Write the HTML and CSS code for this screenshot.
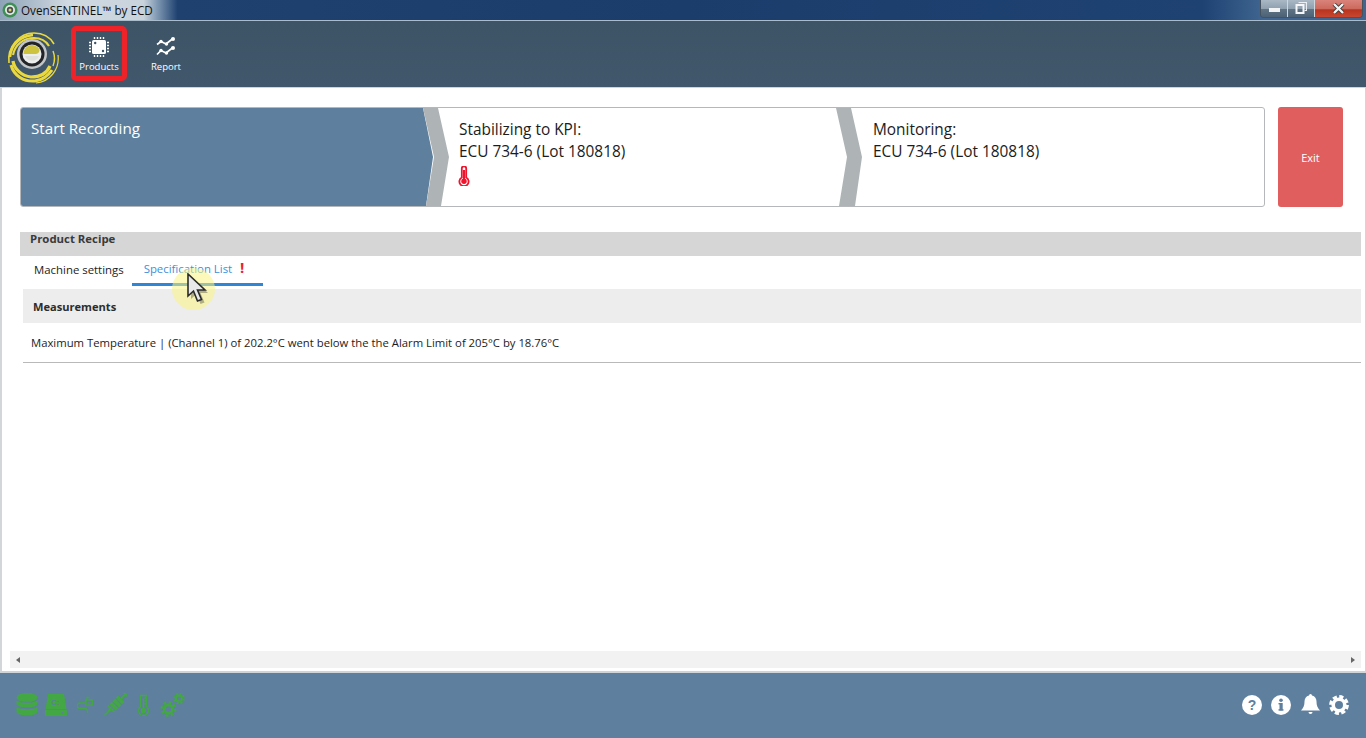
FILE: index.html
```html
<!DOCTYPE html>
<html lang="en">
<head>
<meta charset="utf-8">
<title>OvenSENTINEL by ECD</title>
<link rel="stylesheet" href="styles.css">
</head>
<body>
<div class="window">
  <header class="titlebar">
    <svg class="app-icon" width="16" height="16" viewBox="0 0 16 16"><circle cx="8" cy="8" r="7.5" fill="#3f8f56"/><circle cx="8" cy="8" r="5" fill="#e6ebe6"/><circle cx="8" cy="8" r="3.2" fill="#4a4f55"/><circle cx="8" cy="8" r="1.5" fill="#d8d36a"/></svg>
    <span class="title-text">OvenSENTINEL™ by ECD</span>
    <div class="win-buttons">
      <div class="win-btn win-min"><span class="min-bar"></span></div>
      <div class="win-btn win-max"><svg width="12" height="12" viewBox="0 0 12 12"><path d="M3.5 .5h8v8h-2" fill="none" stroke="#e8eef3" stroke-width="1.2"/><rect x="1.5" y="3" width="7" height="8" fill="none" stroke="#f4f6f8" stroke-width="2"/></svg></div>
      <div class="win-btn win-close"><svg width="13" height="11" viewBox="0 0 13 11"><path d="M2 1l9 9M11 1l-9 9" stroke="#3c3c3c" stroke-width="4"/><path d="M2 1l9 9M11 1l-9 9" stroke="#f2f2f2" stroke-width="2.4"/></svg></div>
    </div>
  </header>

  <nav class="toolbar">
    <svg class="logo" width="54" height="54" viewBox="0 0 54 54">
      <path d="M3 32C1 16 13 2 28 2c9 0 16 4 20 11" fill="none" stroke="#e9d93f" stroke-width="1.6"/>
      <path d="M52 24c2 15-9 27-22 28" fill="none" stroke="#e9d93f" stroke-width="1.2"/>
      <path d="M5 34c3 11 13 17 24 16 7-1 13-5 17-11" fill="none" stroke="#e9d93f" stroke-width="3"/>
      <path d="M4 26C5 13 15 5 27 4" fill="none" stroke="#e9d93f" stroke-width="2.6"/>
      <path d="M7 30c1 8 9 15 18 16 9 0 16-4 19-11" fill="none" stroke="#e9d93f" stroke-width="3.200"/>
      <path d="M7 24C9 14 17 7 28 7c7 0 12 3 15 8" fill="none" stroke="#e9d93f" stroke-width="2.200"/>
      <path d="M47 20c2 5 2 10 0 15" fill="none" stroke="#e9d93f" stroke-width="1.400"/>
      <circle cx="26" cy="23" r="15" fill="#c3c6c8"/>
      <circle cx="26" cy="23" r="12.500" fill="#232427"/>
      <circle cx="26" cy="23" r="9.500" fill="#eceeee"/>
      <path d="M17.500 23a8.500 8.500 0 0 1 16-4.500a4 4 0 0 1-3.500 4.500z" fill="#cdc33f"/>
      <path d="M19 25h14a7.500 7.500 0 0 1-14 0z" fill="#dfe1dc"/>
    </svg>
    <a class="tool tool-active">
      <svg width="20" height="20" viewBox="0 0 20 20"><rect x="3" y="3" width="14" height="14" rx="1.500" fill="#fff"/><circle cx="6.200" cy="6" r="1.200" fill="#3e5568"/><circle cx="14" cy="14" r="1.200" fill="#3e5568"/><path d="M5.500 0v2M8.500 0v2M11.500 0v2M14.500 0v2M5.500 18v2M8.500 18v2M11.500 18v2M14.500 18v2M0 5.500h2M0 8.500h2M0 11.500h2M0 14.500h2M18 5.500h2M18 8.500h2M18 11.500h2M18 14.500h2" stroke="#fff" stroke-width="1.400"/></svg>
      <span>Products</span>
    </a>
    <a class="tool">
      <svg width="20" height="20" viewBox="0 0 20 20" fill="none" stroke="#fff" stroke-width="1.700"><path d="M1 7.500l4-3 5 2.500 7-5.500"/><path d="M1 17.500l4-4 5 2.500 7-5.500"/><g fill="#fff" stroke="none"><circle cx="5" cy="4.500" r="1.700"/><circle cx="10.500" cy="7" r="1.700"/><circle cx="17" cy="2" r="2"/><circle cx="5" cy="13.500" r="1.700"/><circle cx="10.500" cy="16" r="1.700"/><circle cx="17" cy="11" r="2"/></g></svg>
      <span>Report</span>
    </a>
  </nav>

  <main class="content">
    <section class="top-row">
      <div class="stepper">
        <div class="step step-active">Start Recording</div>
        <svg class="chevron" width="26" height="98" viewBox="0 0 26 98"><polygon points="0,0 10,49 3,98 0,98" fill="#5e7f9e"/><polygon points="0,0 15,0 26,49 18,98 3,98 11,49" fill="#aeb4b6"/></svg>
        <div class="step step-two">
          <div>Stabilizing to KPI:</div>
          <div>ECU 734-6 (Lot 180818)</div>
          <svg class="thermo" width="12" height="20" viewBox="0 0 12 20"><path d="M3.800 11.500V2.500a2.200 2.200 0 0 1 4.400 0v9a4.600 4.600 0 1 1-4.400 0z" fill="#fff" stroke="#f0142d" stroke-width="1.800"/><circle cx="6" cy="15.200" r="2.700" fill="#f0142d"/><rect x="5" y="4" width="2" height="10" fill="#f0142d"/></svg>
        </div>
        <svg class="chevron" width="26" height="98" viewBox="0 0 26 98"><polygon points="0,0 15,0 26,49 19,98 3,98 11,49" fill="#aeb4b6"/></svg>
        <div class="step step-three">
          <div>Monitoring:</div>
          <div>ECU 734-6 (Lot 180818)</div>
        </div>
      </div>
      <button class="exit-btn">Exit</button>
    </section>

    <section class="recipe">
      <h2 class="recipe-head">Product Recipe</h2>
      <div class="tabs">
        <div class="tab">Machine settings</div>
        <div class="tab tab-active">Specification List <span class="bang">!</span></div>
      </div>
      <div class="list">
        <h3 class="list-head">Measurements</h3>
        <div class="list-row">Maximum Temperature | (Channel 1) of 202.2°C went below the the Alarm Limit of 205°C by 18.76°C</div>
      </div>
    </section>

    <div class="spacer"></div>

    <div class="hscroll">
      <span class="arrow arrow-left"></span>
      <span class="arrow arrow-right"></span>
    </div>
  </main>

  <footer class="statusbar">
    <div class="status-left">
      <svg class="db" width="22" height="24" viewBox="0 0 22 24" fill="#43a843"><ellipse cx="11" cy="4.500" rx="10.500" ry="4.500"/><path d="M.5 7.500c3 3 18 3 21 0v3.500c-1 4.500-20 4.500-21 0zM.5 14c3 3 18 3 21 0v5c-1 4.500-20 4.500-21 0z"/></svg>
      <svg width="22" height="22" viewBox="0 0 22 22" fill="#43a843"><path d="M3 0h16l2.500 15H.5z"/><rect y="16" width="22" height="6" rx="1"/><circle cx="17.500" cy="19" r="1" fill="#5e7f9e"/><text x="6" y="11" font-size="8" font-family="Liberation Sans" font-weight="700" fill="#5e7f9e">C:</text></svg>
      <svg width="16" height="18" viewBox="0 0 16 18" fill="none" stroke="#43a843" stroke-width="1.300"><path d="M9 7H3a2.500 2.500 0 0 0 0 5.500h5c2 0 2.500 1.500 2.500 3v1.500"/><rect x="9" y="4" width="6.500" height="5"/><path d="M10 4V1.500h2.500"/></svg>
      <svg width="24" height="24" viewBox="0 0 24 24" fill="#43a843"><g transform="rotate(45 12 12)"><rect x="7.500" y="3" width="9" height="3.500"/><rect x="7.500" y="7.500" width="9" height="3.500"/><rect x="7.500" y="12" width="9" height="3.500"/><rect x="7.500" y="16.500" width="9" height="2"/><rect x="11" y="-3" width="2" height="6"/><rect x="9" y="-4" width="6" height="1.800"/><path d="M10.500 18.500h3l-1 5h-1z"/><rect x="11.300" y="23" width="1.400" height="4"/></g></svg>
      <svg width="13" height="22" viewBox="0 0 13 22" fill="none" stroke="#43a843" stroke-width="1.300"><path d="M3.500 12.500V1.500h6v11a5 5 0 1 1-6 0z"/><circle cx="6.500" cy="16.500" r="2" fill="#43a843"/><path d="M6.500 5v10M9.500 4h-2M9.500 7h-2M9.500 10h-2"/></svg>
      <svg width="25" height="24" viewBox="0 0 25 24" fill="none" stroke="#43a843"><circle cx="8.500" cy="16" r="4.200" stroke-width="2.800"/><circle cx="8.500" cy="16" r="6.600" stroke-width="2.800" stroke-dasharray="2.600 2.600"/><circle cx="19" cy="5.500" r="3" stroke-width="2"/><circle cx="19" cy="5.500" r="4.700" stroke-width="2" stroke-dasharray="2 1.700"/></svg>
    </div>
    <div class="status-right">
      <svg width="20" height="20" viewBox="0 0 20 20"><circle cx="10" cy="10" r="10" fill="#fff"/><text x="10" y="15" text-anchor="middle" font-size="14" font-weight="700" font-family="Liberation Sans" fill="#5e7f9e">?</text></svg>
      <svg width="20" height="20" viewBox="0 0 20 20"><circle cx="10" cy="10" r="10" fill="#fff"/><rect x="8.500" y="8" width="3.200" height="7.500" fill="#5e7f9e"/><rect x="7.500" y="8" width="3" height="1.400" fill="#5e7f9e"/><rect x="7.500" y="14.200" width="5" height="1.400" fill="#5e7f9e"/><circle cx="10" cy="5.300" r="1.800" fill="#5e7f9e"/></svg>
      <svg class="bell" width="19" height="21" viewBox="0 0 19 21" fill="#fff"><path d="M9.500 0a1.500 1.500 0 0 1 1.500 1.500c3 .7 4.500 3.300 4.500 6 0 4 1 6.500 3.500 9H0c2.500-2.500 3.500-5 3.500-9 0-2.700 1.500-5.300 4.500-6A1.500 1.500 0 0 1 9.500 0z"/><path d="M7.500 18a2 2 0 0 0 4 0z"/></svg>
      <svg width="20" height="20" viewBox="0 0 20 20"><circle cx="10" cy="10" r="5.800" fill="none" stroke="#fff" stroke-width="3.600"/><circle cx="10" cy="10" r="8.300" fill="none" stroke="#fff" stroke-width="3.200" stroke-dasharray="4.100 2.420"/></svg>
    </div>
  </footer>

  <div class="cursor-halo"></div>
  <svg class="cursor" width="22" height="32" viewBox="0 0 22 32"><path d="M2 2v22l5.500-5 4 10 4-1.500-4-9.500h7.500z" fill="#000" opacity=".28" transform="translate(2 2)"/><path d="M1 1v22l5.500-5 4 10 4-1.500-4-9.500h7.500z" fill="#e9e9e9" stroke="#2a2a2a" stroke-width="1.600"/></svg>
  <div class="red-frame"></div>
</div>
</body>
</html>
```

FILE: styles.css
```css
* { box-sizing: border-box; }
html, body { margin: 0; padding: 0; height: 100%; overflow: hidden; }
body { font-family: "Open Sans", "Noto Sans", "Liberation Sans", sans-serif; color: #1c1c1c; background: #fff; }

.window { position: relative; display: flex; flex-direction: column; width: 1366px; height: 738px; }

.titlebar {
  display: flex; align-items: center; height: 21px; padding-left: 2px; flex: none;
  border-bottom: 1px solid #a9bccb;
  background: linear-gradient(90deg, #8ea3b8 0, #d0d9e1 5%, #c9d3dc 10.500%, #8099b3 11.500%, #1e4170 13%, #1b3d6c 50%, #1e4272 88%, #3f6590 92.500%);
}
.app-icon { flex: none; }
.title-text { margin-left: 3px; font-size: 11.700px; color: #111; white-space: nowrap; }
.win-buttons { display: flex; height: 18px; margin-left: auto; margin-top: -3px; margin-right: 3px; border: 1px solid #46525e; border-top: 0; border-radius: 0 0 4px 4px; overflow: hidden; }
.win-btn { display: flex; align-items: center; justify-content: center; height: 100%; border-right: 1px solid #cfd7de; }
.win-btn:last-child { border-right: 0; }
.win-min, .win-max { width: 27px; background: linear-gradient(#aab8c5 0, #8fa0af 50%, #5f7385 55%, #4d6275 100%); }
.win-close { width: 47px; background: linear-gradient(#d9837a 0, #cd6a5e 50%, #b8341f 58%, #c8452f 100%); }
.min-bar { display: block; width: 11px; height: 4px; margin-top: 4px; background: #f1f3f5; }

.toolbar {
  display: flex; align-items: flex-start; flex: none; height: 67px; padding: 9px 0 0 6px;
  background: linear-gradient(#3d5366, #41586c);
  border-bottom: 1px solid #cfd4d8;
}
.logo { flex: none; margin-top: 1px; }
.tool { display: flex; flex-direction: column; align-items: center; gap: 4px; width: 56px; color: #fff; font-size: 9.500px; line-height: 12px; padding-top: 7px; }
.tool-active { margin-left: 11px; }
.tool + .tool { margin-left: 11px; }

.content {
  flex: 1; display: flex; flex-direction: column; min-height: 0;
  padding: 19px 5px 3px 10px;
  border-left: 2px solid #d2d6d9; border-right: 1px solid #d2d6d9;
  border-bottom: 2px solid #cfd4d8;
}
.top-row { display: flex; align-items: stretch; flex: none; padding-left: 8px; gap: 13px; height: 100px; }
.stepper { display: flex; width: 1245px; height: 100px; border: 1px solid #b5b8ba; border-radius: 3px; overflow: hidden; font-size: 15.400px; line-height: 22px; }
.step { padding-top: 11px; }
.step-active { width: 402px; flex: none; padding-top: 9px; padding-left: 10px; color: #fff; background: #5e7f9e; font-size: 15.200px; }
.chevron { flex: none; display: block; }
.step-two { width: 387px; flex: none; padding-left: 10px; }
.step-three { flex: 1; padding-left: 11px; }
.thermo { display: block; margin-top: 3px; margin-left: -1px; }
.exit-btn { width: 65px; height: 100px; border: 0; border-radius: 3px; background: #e05f5e; color: #fff; font: 11px "Open Sans", sans-serif; padding: 0; }

.recipe { margin-top: 25px; margin-left: 8px; width: 1341px; flex: none; }
.recipe-head { margin: 0; height: 24px; padding-left: 10px; background: #d6d6d6; font-size: 11.400px; line-height: 14px; font-weight: 700; color: #3a3a3a; }
.tabs { display: flex; height: 33px; padding-left: 4px; font-size: 11.400px; }
.tab { padding: 6px 10px 0; line-height: 16px; color: #1c1c1c; }
.tab:first-child { padding-right: 8px; }
.tab-active { width: 131px; height: 30px; padding: 4px 0 0 12px; color: #3d8fdc; border-bottom: 3px solid #2f86d6; white-space: nowrap; }
.bang { margin-left: 5px; color: #ee2229; font-weight: 700; font-size: 15px; line-height: 14px; }
.list { margin-left: 3px; }
.list-head { margin: 0; height: 34px; padding-left: 10px; background: #ededed; font-size: 11.100px; line-height: 36px; font-weight: 700; color: #2c2c2c; }
.list-row { height: 40px; padding-left: 8px; border-bottom: 1px solid #b9b9b9; font-size: 11.300px; line-height: 40px; white-space: nowrap; }

.spacer { flex: 1; }
.hscroll { display: flex; justify-content: space-between; align-items: center; flex: none; width: 1351px; height: 17px; margin-left: -2px; padding: 0 6px; background: #f2f2f2; }
.arrow { display: block; width: 0; height: 0; border-top: 3.500px solid transparent; border-bottom: 3.500px solid transparent; }
.arrow-left { border-right: 4px solid #666; }
.arrow-right { border-left: 4px solid #666; }

.statusbar { display: flex; justify-content: space-between; align-items: center; flex: none; height: 65px; padding: 0 17px 2px 16px; background: #5e7f9e; }
.status-left { display: flex; align-items: center; gap: 10px; }
.db { margin-right: -3px; }
.status-right { display: flex; align-items: center; gap: 9px; }
.bell { margin-left: 1px; }

.red-frame { position: absolute; left: 71px; top: 26px; width: 56px; height: 55px; border: 5px solid #ee2229; border-radius: 5px; }
.cursor-halo { position: absolute; left: 172px; top: 268px; width: 43px; height: 42px; border-radius: 50%; background: rgba(250, 244, 130, .55); }
.cursor { position: absolute; left: 187px; top: 273px; }
```
